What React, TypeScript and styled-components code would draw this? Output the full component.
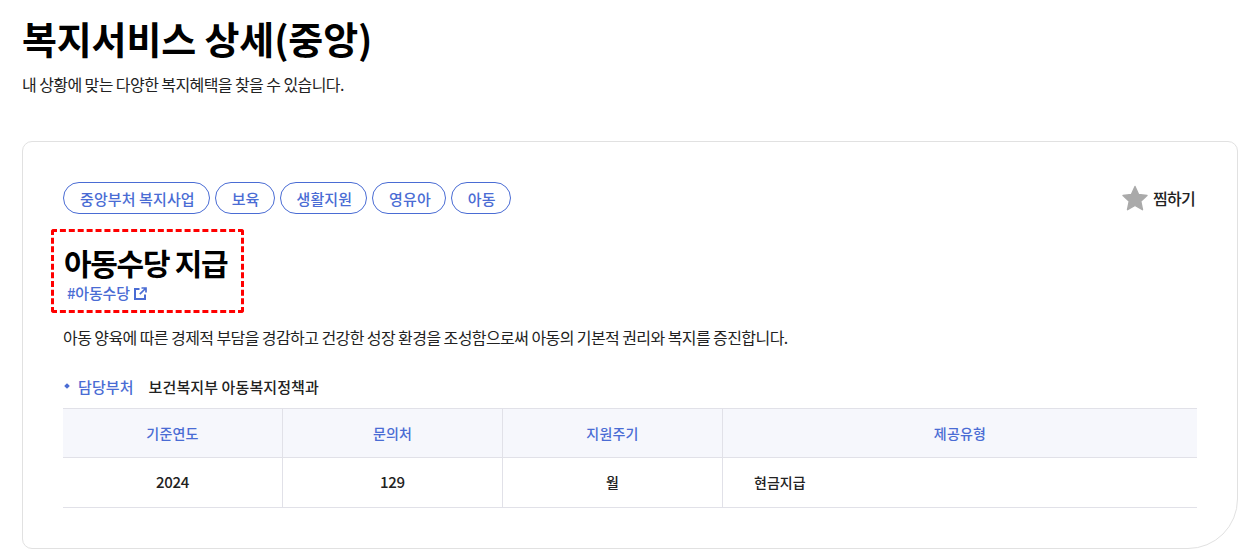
import styled, { createGlobalStyle } from "styled-components";

const GlobalStyle = createGlobalStyle`
  html, body {
    margin: 0;
    padding: 0;
    background: #fff;
    font-family: "Noto Sans CJK KR", "Noto Sans", sans-serif;
    color: #111;
  }
`;

const Page = styled.div`
  width: 1253px;
  height: 553px;
  box-sizing: border-box;
  padding: 0 15px 0 22px;
  overflow: hidden;
`;

const PageTitle = styled.h1`
  margin: 0;
  padding-top: 10px;
  font-size: 38px;
  line-height: 56px;
  font-weight: 700;
  letter-spacing: -0.15px;
  color: #000;
`;

const PageDesc = styled.p`
  margin: 6px 0 0;
  font-size: 16px;
  line-height: 24px;
  letter-spacing: -0.58px;
  color: #222;
`;

const Card = styled.section`
  box-sizing: border-box;
  margin-top: 45px;
  height: 408px;
  padding: 40px 40px 0;
  border: 1px solid #e1e1e1;
  border-radius: 10px 10px 50px 10px;
`;

const TopRow = styled.div`
  display: flex;
  align-items: center;
  justify-content: space-between;
`;

const Tags = styled.div`
  display: flex;
  gap: 5px;
`;

const Tag = styled.span`
  box-sizing: border-box;
  height: 32px;
  padding: 0 14px 0 16px;
  display: flex;
  align-items: center;
  border: 1px solid #4a6cd4;
  border-radius: 16px;
  font-size: 15px;
  font-weight: 500;
  letter-spacing: 0.1px;
  color: #4a6cd4;
`;

const Bookmark = styled.button`
  display: flex;
  align-items: center;
  gap: 5px;
  padding: 0;
  margin-right: 2px;
  border: none;
  background: none;
  font: inherit;
  font-size: 16px;
  font-weight: 500;
  letter-spacing: -0.7px;
  color: #222;
`;

const Highlight = styled.div`
  box-sizing: border-box;
  width: 193px;
  height: 84px;
  margin: 15px 0 0 -12px;
  padding: 10px 0 0 10px;
  border: 3px dashed #f00;
  border-radius: 3px;
`;

const Name = styled.h2`
  margin: 0;
  font-size: 30px;
  line-height: 40px;
  font-weight: 700;
  letter-spacing: -1.3px;
  color: #000;
`;

const Hash = styled.a`
  display: flex;
  align-items: center;
  gap: 4px;
  padding-left: 3px;
  font-size: 15px;
  line-height: 22px;
  font-weight: 500;
  letter-spacing: -0.2px;
  color: #4a6cd4;
`;

const Summary = styled.p`
  margin: 12px 0 0;
  font-size: 16px;
  line-height: 24px;
  letter-spacing: -0.58px;
  color: #222;
`;

const Dept = styled.div`
  display: flex;
  align-items: center;
  margin-top: 25px;
  height: 24px;
  font-size: 15px;
  letter-spacing: 0.1px;
`;

const Dot = styled.span`
  width: 4px;
  height: 4px;
  margin: 0 9px 0 2px;
  background: #4a6cd4;
  transform: rotate(45deg);
`;

const DeptLabel = styled.span`
  margin-right: 15px;
  font-weight: 500;
  color: #4a6cd4;
`;

const DeptValue = styled.span`
  font-weight: 500;
  color: #222;
`;

const Table = styled.div`
  display: grid;
  grid-template-columns: 220px 220px 220px 1fr;
  margin-top: 10px;
  border-top: 1px solid #e1e1e8;
`;

const Cell = styled.div<{ $head?: boolean; $left?: boolean; $last?: boolean; $num?: boolean }>`
  box-sizing: border-box;
  height: ${(p) => (p.$head ? 49 : 50)}px;
  display: flex;
  align-items: center;
  justify-content: ${(p) => (p.$left ? "flex-start" : "center")};
  padding-left: ${(p) => (p.$left ? 31 : 0)}px;
  padding-bottom: ${(p) => (p.$head ? 0 : 2)}px;
  border-bottom: 1px solid #e1e1e8;
  border-right: ${(p) => (p.$last ? "none" : "1px solid #e1e1e8")};
  background: ${(p) => (p.$head ? "#f6f7fc" : "#fff")};
  color: ${(p) => (p.$head ? "#4a6cd4" : "#222")};
  font-size: ${(p) => (p.$num ? 15 : 14)}px;
  font-weight: 500;
  letter-spacing: ${(p) => (p.$num ? "-0.3px" : p.$head ? "0.2px" : "0")};
`;

const heads = ["기준연도", "문의처", "지원주기", "제공유형"];
const values = ["2024", "129", "월", "현금지급"];
const tags = ["중앙부처 복지사업", "보육", "생활지원", "영유아", "아동"];

export default function App() {
  return (
    <Page>
      <GlobalStyle />
      <PageTitle>복지서비스 상세(중앙)</PageTitle>
      <PageDesc>내 상황에 맞는 다양한 복지혜택을 찾을 수 있습니다.</PageDesc>
      <Card>
        <TopRow>
          <Tags>
            {tags.map((t) => (
              <Tag key={t}>{t}</Tag>
            ))}
          </Tags>
          <Bookmark>
            <svg width="26" height="27" viewBox="0 0 26 27">
              <path
                d="M13 1.5l3.6 8 8.4 1-6.2 5.8 1.7 8.4-7.5-4.2-7.5 4.2 1.7-8.4L1 10.5l8.4-1z"
                fill="#aaa"
                stroke="#aaa"
                strokeWidth="1.4"
                strokeLinejoin="round"
              />
            </svg>
            찜하기
          </Bookmark>
        </TopRow>
        <Highlight>
          <Name>아동수당 지급</Name>
          <Hash>
            #아동수당
            <svg width="13" height="13" viewBox="0 0 13 13" fill="none" stroke="#4a6cd4" strokeWidth="2">
              <path d="M5.5 2H1v10h10V7.5" />
              <path d="M7.5 1h4.5v4.5M11.5 1.5L5.8 7.2" strokeWidth="1.7" />
            </svg>
          </Hash>
        </Highlight>
        <Summary>
          아동 양육에 따른 경제적 부담을 경감하고 건강한 성장 환경을 조성함으로써 아동의 기본적 권리와 복지를 증진합니다.
        </Summary>
        <Dept>
          <Dot />
          <DeptLabel>담당부처</DeptLabel>
          <DeptValue>보건복지부 아동복지정책과</DeptValue>
        </Dept>
        <Table>
          {heads.map((h, i) => (
            <Cell key={h} $head $last={i === 3}>
              {h}
            </Cell>
          ))}
          {values.map((v, i) => (
            <Cell key={v} $last={i === 3} $left={i === 3} $num={i < 2}>
              {v}
            </Cell>
          ))}
        </Table>
      </Card>
    </Page>
  );
}
